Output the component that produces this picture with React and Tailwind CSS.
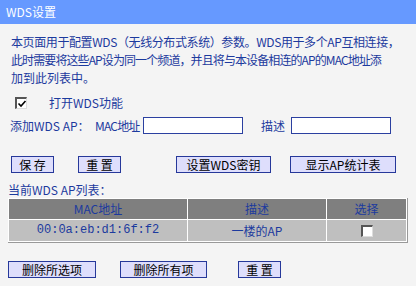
import React from "react";

const Btn = ({ children, className = "" }) => (
  <button
    className={`h-[17px] bg-[#dedefc] border border-[#26389a] text-black text-[12px] leading-[15px] whitespace-nowrap p-0 ${className}`}
  >
    {children}
  </button>
);

const Check = ({ checked, className = "" }) => (
  <div
    className={`w-[12px] h-[12px] bg-white border-t-2 border-l-2 border-b border-r border-t-[#555] border-l-[#555] border-b-[#ddd] border-r-[#ddd] relative ${className}`}
  >
    {checked && (
      <svg viewBox="0 0 10 10" className="absolute left-0 top-0 w-[10px] h-[10px]">
        <path d="M1.5 4.5 L4 7 L8.5 2" stroke="#000" strokeWidth="1.6" fill="none" />
      </svg>
    )}
  </div>
);

export default function App() {
  return (
    <div className="w-[416px] h-[286px] overflow-hidden bg-[#f4f4f4] text-[12px] text-[#1c3a9e] font-[family-name:'Noto_Sans_CJK_SC',sans-serif]">
      <div className="h-[24px] bg-[#6699ff] text-white pl-[6px] leading-[24px]">WDS设置</div>

      <div className="mt-[9px] pl-[11px] leading-[18px] whitespace-nowrap">
        <div className="tracking-[-0.4px]">本页面用于配置WDS（无线分布式系统）参数。WDS用于多个AP互相连接，</div>
        <div className="tracking-[-0.9px]">此时需要将这些AP设为同一个频道，并且将与本设备相连的AP的MAC地址添</div>
        <div>加到此列表中。</div>
      </div>

      <div className="mt-[7px] h-[18px] flex items-center">
        <Check checked className="ml-[15px]" />
        <span className="ml-[22px]">打开WDS功能</span>
      </div>

      <div className="mt-[5px] h-[17px] flex items-center whitespace-nowrap">
        <span className="ml-[10px] w-[85px]">添加WDS AP：</span>
        <span className="w-[48px] tracking-[-0.8px]">MAC地址</span>
        <input className="w-[100px] h-[17px] bg-white border border-[#2b40a0] outline-none" />
        <span className="ml-[18px] w-[30px]">描述</span>
        <input className="w-[100px] h-[17px] bg-white border border-[#2b40a0] outline-none" />
      </div>

      <div className="mt-[22px] flex">
        <Btn className="ml-[11px] w-[43px]">保 存</Btn>
        <Btn className="ml-[24px] w-[43px]">重 置</Btn>
        <Btn className="ml-[55px] w-[95px]">设置WDS密钥</Btn>
        <Btn className="ml-[19px] w-[106px]">显示AP统计表</Btn>
      </div>

      <div className="mt-[9px] pl-[8px] h-[16px] leading-[16px]">当前WDS AP列表：</div>

      <div className="ml-[8px] w-[400px] border-r border-b border-[#999]">
        <div className="grid grid-cols-[178px_138px_1fr] gap-px bg-white p-px text-center">
          <div className="h-[20px] leading-[20px] bg-[#7f7f7f]">MAC地址</div>
          <div className="h-[20px] leading-[20px] bg-[#7f7f7f]">描述</div>
          <div className="h-[20px] leading-[20px] bg-[#7f7f7f]">选择</div>
          <div className="h-[21px] leading-[21px] bg-[#bfbfbf] font-[family-name:'Liberation_Mono',monospace]">00:0a:eb:d1:6f:f2</div>
          <div className="h-[21px] leading-[21px] bg-[#bfbfbf]">一楼的AP</div>
          <div className="h-[21px] bg-[#bfbfbf] flex items-center justify-center">
            <Check />
          </div>
        </div>
      </div>

      <div className="mt-[18px] flex">
        <Btn className="ml-[8px] w-[88px]">删除所选项</Btn>
        <Btn className="ml-[24px] w-[87px]">删除所有项</Btn>
        <Btn className="ml-[31px] w-[43px]">重 置</Btn>
      </div>
    </div>
  );
}
